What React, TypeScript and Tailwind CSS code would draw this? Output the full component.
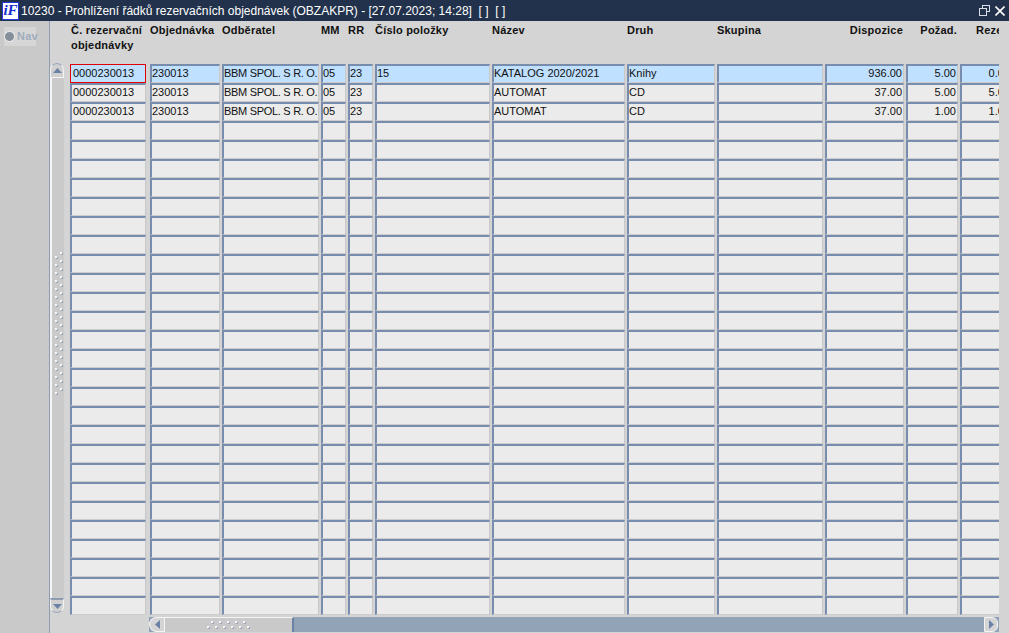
import React from "react";

const columns = [
  { label: "Č. rezervační objednávky" },
  { label: "Objednávka" },
  { label: "Odběratel" },
  { label: "MM" },
  { label: "RR" },
  { label: "Číslo položky" },
  { label: "Název" },
  { label: "Druh" },
  { label: "Skupina" },
  { label: "Dispozice", right: true },
  { label: "Požad.", right: true },
  { label: "Rezerv." },
];

const data = [
  ["0000230013", "230013", "BBM SPOL. S R. O.", "05", "23", "15", "KATALOG 2020/2021", "Knihy", "", "936.00", "5.00", "0.00"],
  ["0000230013", "230013", "BBM SPOL. S R. O.", "05", "23", "", "AUTOMAT", "CD", "", "37.00", "5.00", "5.00"],
  ["0000230013", "230013", "BBM SPOL. S R. O.", "05", "23", "", "AUTOMAT", "CD", "", "37.00", "1.00", "1.00"],
];

const rows = Array.from({ length: 29 }, (_, i) => data[i] ?? Array(12).fill(""));
const gridCols = "grid grid-cols-[80px_72px_99px_27px_27px_117px_135px_90px_108px_81px_54px_54px]";

function Dot({ x, y }: { x: number; y: number }) {
  return (
    <>
      <rect x={x + 1} y={y + 1} width="2" height="2" fill="#98a6b8" />
      <rect x={x} y={y} width="2" height="2" fill="#f8f8f8" />
    </>
  );
}

function VScrollDots() {
  const dots = [];
  for (let i = 0; i < 18; i++) {
    dots.push(<Dot key={`a${i}`} x={0} y={i * 8 + 4} />);
    dots.push(<Dot key={`b${i}`} x={5} y={i * 8} />);
  }
  return (
    <svg width="9" height="150" className="absolute left-[5px] top-[189px]">
      {dots}
    </svg>
  );
}

function HScrollDots() {
  const dots = [];
  for (let i = 0; i < 5; i++) dots.push(<Dot key={`a${i}`} x={4 + i * 8} y={0} />);
  for (let i = 0; i < 6; i++) dots.push(<Dot key={`b${i}`} x={i * 8} y={5} />);
  return <svg width="44" height="9">{dots}</svg>;
}

function Cell({ value, col, selected }: { value: string; col: number; selected: boolean }) {
  const first = col === 0;
  const right = col >= 9;
  return (
    <div
      className={`h-[19px] overflow-hidden text-[11px] leading-[13px] whitespace-nowrap text-[#111] ${
        first ? "w-[76px]" : "w-full"
      } ${col === 2 ? "tracking-[-0.3px]" : ""} ${right ? "pr-[1px] text-right" : ""} ${
        first && selected
          ? "border border-[#e00000] bg-[#bfe0ff] pt-[2px] pl-[2px]"
          : `border-t-2 border-r border-b border-l-2 border-t-[#788cad] border-r-[#c8c8c8] border-b-[#cccccc] border-l-[#788cad] pt-[1px] ${
              first ? "pl-[1px]" : ""
            } ${selected ? "bg-[#bfe0ff]" : "bg-[#ebebeb]"}`
      }`}
    >
      {value}
    </div>
  );
}

export default function App() {
  return (
    <div className="flex h-[633px] w-[1009px] flex-col overflow-hidden bg-[#d4d4d4] font-['Liberation_Sans',Arial,sans-serif]">
      <div className="flex h-[21px] items-center bg-[#22324c] text-white">
        <div className="ml-[2px] flex h-[18px] w-[17px] items-center justify-center border border-[#2438d8] bg-white font-['Liberation_Serif',serif] text-[15px] leading-none font-bold text-[#1a2ccf] italic">
          iF
        </div>
        <div className="ml-[2px] flex-1 text-[12px] whitespace-nowrap">
          10230 - Prohlížení řádků rezervačních objednávek (OBZAKPR) - [27.07.2023; 14:28]&nbsp; [ ]&nbsp; [ ]
        </div>
        <svg width="11" height="11" viewBox="0 0 11 11" className="mr-[5px]" fill="none" stroke="#d8dde6">
          <rect x="3.5" y="0.5" width="7" height="6" />
          <rect x="0.5" y="3.5" width="7" height="7" fill="#22324c" />
        </svg>
        <svg width="10" height="10" viewBox="0 0 10 10" className="mr-[4px]" stroke="#fff" strokeWidth="1.6">
          <path d="M0.5 0.5 L9.5 9.5 M9.5 0.5 L0.5 9.5" />
        </svg>
      </div>

      <div className="flex flex-1">
        <aside className="w-[50px] border-r border-[#8e9db1] bg-[#c9c9c9] pt-[6px] pl-[4px]">
          <div className="flex h-[19px] w-[32px] items-center bg-[#d6d6d6]">
            <span className="h-[11px] w-[11px] shrink-0 rounded-full border border-[#f2f2f2] bg-[#858e9b]" />
            <span className="ml-[2px] text-[11px] font-bold tracking-[0.2px] text-[#a0acbc]">Nav</span>
          </div>
        </aside>

        <div className="flex flex-1">
          <div className="w-[20px] pt-[42px]">
            <div className="relative flex h-[550px] w-[14px] flex-col">
              <div className="flex h-[15px] items-center justify-center rounded-t-full border-x border-t border-b border-x-[#f4f4f4] border-t-[#9aa8bb] border-b-[#f4f4f4] bg-[#d0d0d0]">
                <svg width="9" height="5"><path d="M4.5 0 L9 5 L0 5 Z" fill="#6c81a6" /></svg>
              </div>
              <div className="flex-1 border-l-2 border-[#f4f4f4] bg-[#cacaca]" />
              <VScrollDots />
              <div className="flex h-[15px] items-center justify-center rounded-b-full border-x border-b border-t-2 border-x-[#f4f4f4] border-t-[#8e9db1] border-b-[#9aa8bb] bg-[#d0d0d0]">
                <svg width="9" height="5"><path d="M0 0 L9 0 L4.5 5 Z" fill="#6c81a6" /></svg>
              </div>
            </div>
          </div>

          <div className="w-[929px] overflow-hidden">
            <div className={`${gridCols} h-[43px] pt-[2px]`}>
              {columns.map((c, i) => (
                <div
                  key={i}
                  className={`text-[11px] leading-[15px] font-bold tracking-[0.2px] text-[#111] ${
                    c.right ? "pr-[3px] text-right whitespace-nowrap" : ""
                  } ${i === 0 ? "w-[76px] pl-[1px]" : "whitespace-nowrap"} ${i === 11 ? "pl-[16px]" : ""}`}
                >
                  {c.label}
                </div>
              ))}
            </div>
            {rows.map((row, r) => (
              <div key={r} className={gridCols}>
                {row.map((value: string, c: number) => (
                  <div key={c} className={c === 0 ? "" : "pr-[2px]"}>
                    <Cell value={value} col={c} selected={r === 0} />
                  </div>
                ))}
              </div>
            ))}

            <div className="mt-[2px] ml-[79px] flex h-[15px] w-[850px] bg-[#93a3b7]">
              <div className="flex w-[15px] items-center justify-center rounded-l-full border-y border-l border-[#f4f4f4] bg-[#d4d4d4]">
                <svg width="5" height="9"><path d="M5 0 L5 9 L0 4.5 Z" fill="#6c81a6" /></svg>
              </div>
              <div className="flex w-[130px] items-center justify-center border-t border-r-2 border-l border-t-[#f4f4f4] border-r-[#6c81a6] border-l-[#f4f4f4] bg-[#c9c9c9]">
                <HScrollDots />
              </div>
              <div className="flex-1" />
              <div className="mr-[1px] flex w-[14px] items-center justify-center rounded-r-md border border-[#f4f4f4] bg-[#d4d4d4]">
                <svg width="5" height="9"><path d="M0 0 L0 9 L5 4.5 Z" fill="#6c81a6" /></svg>
              </div>
            </div>
          </div>
          <div className="flex-1" />
        </div>
      </div>
    </div>
  );
}
